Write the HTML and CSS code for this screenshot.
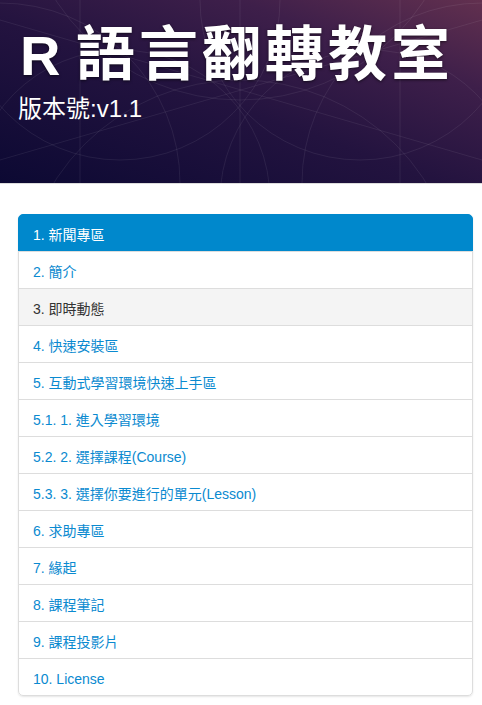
FILE: index.html
```html
<!DOCTYPE html>
<html lang="zh-Hant">
<head>
<meta charset="utf-8">
<title>R 語言翻轉教室</title>
<link rel="stylesheet" href="styles.css">
</head>
<body>
<header class="hero">
  <svg class="hero-pattern" width="482" height="183" viewBox="0 0 482 183" aria-hidden="true">
    <g fill="none" stroke="rgba(255,255,255,0.07)" stroke-width="1">
      <circle cx="0" cy="183" r="180"/>
      <circle cx="240" cy="300" r="220"/>
      <circle cx="240" cy="-120" r="220"/>
      <circle cx="482" cy="183" r="180"/>
      <circle cx="120" cy="0" r="160"/>
      <circle cx="360" cy="0" r="160"/>
      <circle cx="120" cy="200" r="150"/>
      <circle cx="370" cy="200" r="150"/>
      <line x1="0" y1="20" x2="482" y2="160"/>
      <line x1="0" y1="160" x2="482" y2="20"/>
      <line x1="240" y1="0" x2="240" y2="183"/>
      <line x1="80" y1="0" x2="80" y2="183"/>
      <line x1="400" y1="0" x2="400" y2="183"/>
    </g>
  </svg>
  <h1 class="hero-title">R <span class="hero-title-cjk">語言翻轉教室</span></h1>
  <p class="hero-sub">版本號:v1.1</p>
</header>

<main class="content">
  <nav class="list-group">
    <a class="list-item active" href="#">1. 新聞專區</a>
    <a class="list-item" href="#">2. 簡介</a>
    <a class="list-item hover" href="#">3. 即時動態</a>
    <a class="list-item" href="#">4. 快速安裝區</a>
    <a class="list-item" href="#">5. 互動式學習環境快速上手區</a>
    <a class="list-item" href="#">5.1. 1. 進入學習環境</a>
    <a class="list-item" href="#">5.2. 2. 選擇課程(Course)</a>
    <a class="list-item" href="#">5.3. 3. 選擇你要進行的單元(Lesson)</a>
    <a class="list-item" href="#">6. 求助專區</a>
    <a class="list-item" href="#">7. 緣起</a>
    <a class="list-item" href="#">8. 課程筆記</a>
    <a class="list-item" href="#">9. 課程投影片</a>
    <a class="list-item" href="#">10. License</a>
  </nav>
</main>
</body>
</html>
```

FILE: styles.css
```css
* { box-sizing: border-box; }

html, body {
  margin: 0;
  padding: 0;
  background: #fff;
}

body {
  font-family: "Liberation Sans", "Noto Sans CJK TC", sans-serif;
  font-size: 14px;
  line-height: 20px;
  color: #333;
}

.hero {
  position: relative;
  height: 184px;
  overflow: hidden;
  background: linear-gradient(20deg, #0c0933 0%, #23133f 45%, #3e1f4a 75%, #62304f 100%);
  border-bottom: 1px solid #dcdcdc;
  padding: 24px 18px 0 20px;
  color: #fff;
}

.hero-pattern {
  position: absolute;
  left: 0;
  top: 0;
}

.hero-title {
  position: relative;
  margin: 0;
  font-family: "Liberation Sans", "Noto Sans CJK TC", sans-serif;
  font-weight: bold;
  font-size: 56px;
  line-height: 62px;
  white-space: nowrap;
  text-shadow: 0 1px 3px rgba(0, 0, 0, 0.6);
}

.hero-title-cjk {
  font-size: 59px;
  letter-spacing: 4px;
}

.hero-sub {
  position: relative;
  margin: 7px 0 0 -2px;
  font-size: 24px;
  line-height: 30px;
  font-weight: normal;
  color: #fff;
}

.content {
  padding: 30px 9px 10px 18px;
}

.list-group {
  display: flex;
  flex-direction: column;
  border-radius: 5px;
  box-shadow: 0 1px 2px rgba(0, 0, 0, 0.1);
}

.list-item {
  display: block;
  padding: 10px 14px 6px;
  margin-bottom: -1px;
  border: 1px solid #ddd;
  background: #fff;
  color: #0a8ad0;
  text-decoration: none;
  line-height: 20px;
}

.list-item:first-child {
  border-top-left-radius: 5px;
  border-top-right-radius: 5px;
}

.list-item:last-child {
  margin-bottom: 0;
  border-bottom-left-radius: 5px;
  border-bottom-right-radius: 5px;
}

.list-item.active {
  background: #0088cc;
  border-color: #0088cc;
  color: #fff;
}

.list-item.hover {
  background: #f4f4f4;
  color: #333;
}
```
